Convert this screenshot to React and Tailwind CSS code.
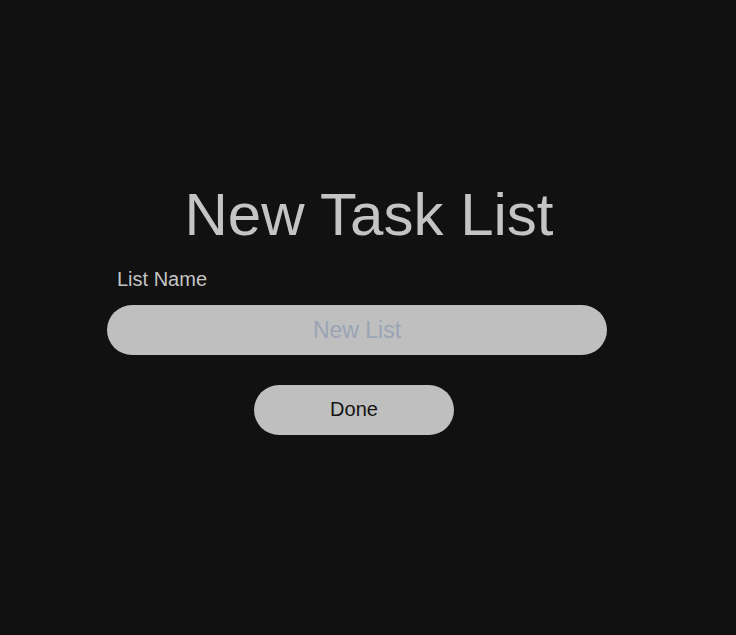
export default function App() {
  return (
    <div
      className="min-h-screen w-full bg-[#111111] flex flex-col items-center pt-[185px]"
      style={{ fontFamily: '"Liberation Sans", Arial, sans-serif' }}
    >
      <h1 className="ml-[2px] text-[60px] leading-[60px] text-[#c4c4c4] font-normal">New Task List</h1>
      <div className="w-[500px] mr-[22px] mt-[24px] flex flex-col">
        <label className="pl-[10px] text-[20px] leading-[20px] text-[#c4c4c4]">List Name</label>
        <input
          className="mt-[16px] h-[50px] w-full rounded-full bg-[#bfbfbf] text-center text-[23px] text-[#222] placeholder:text-[#9ba4b4] outline-none"
          placeholder="New List"
        />
        <div className="mt-[30px] flex justify-center pr-[6px]">
          <button className="h-[50px] w-[200px] rounded-full bg-[#bfbfbf] text-[20px] text-[#151515] pb-[2px]">
            Done
          </button>
        </div>
      </div>
    </div>
  );
}
